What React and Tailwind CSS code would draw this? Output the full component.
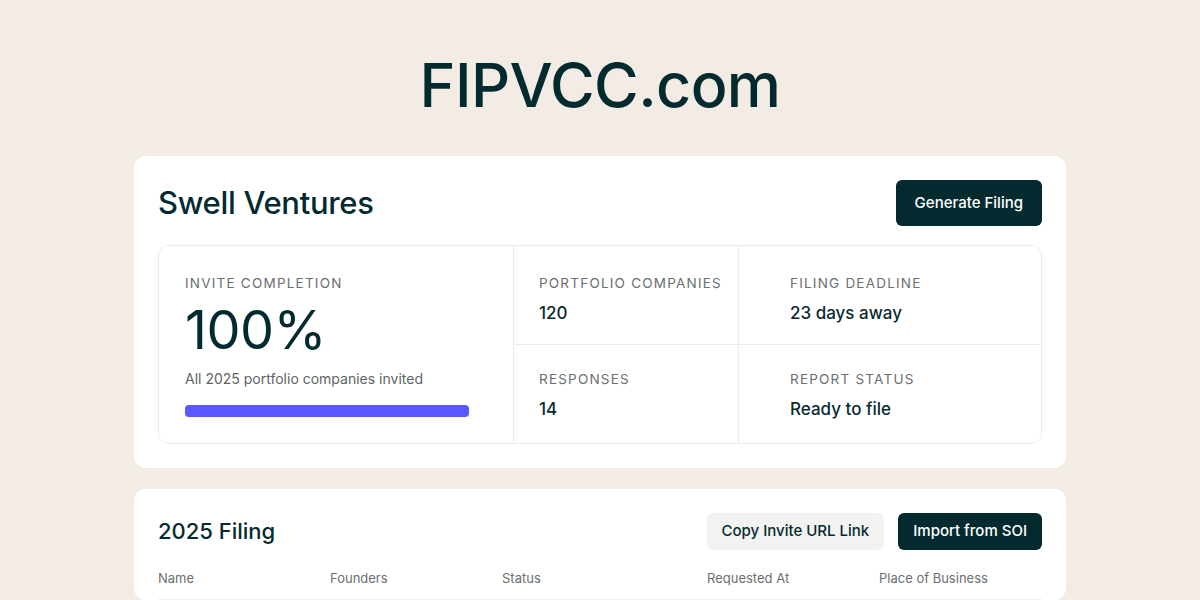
const font = { fontFamily: 'Inter, "Noto Sans", sans-serif' }

const COLUMNS = ['Name', 'Founders', 'Status', 'Requested At', 'Place of Business']

const labelCls = 'whitespace-nowrap text-[13.5px] leading-[16px] tracking-[0.09em] uppercase text-[#6b6f70]'

function Stat({ label, value, className = '' }) {
  return (
    <div className={`flex flex-col px-[25px] ${className}`}>
      <div className={labelCls}>{label}</div>
      <div className="mt-[11px] text-[17px] leading-[22px] font-medium text-[#082b2f]">{value}</div>
    </div>
  )
}

export default function App() {
  return (
    <div className="min-h-screen bg-[#f3ece5] text-[#032b2f]" style={font}>
      <div className="h-[600px] overflow-hidden">
        <h1 className="pt-[47px] text-center text-[61px] leading-[76px] font-medium tracking-[-0.01em] text-[#032b2f]">
          FIPVCC.com
        </h1>

        <div className="mx-auto mt-[33px] w-[932px] rounded-[12px] bg-white px-6 pt-6 pb-6">
          <div className="flex items-center justify-between">
            <h2 className="text-[31px] leading-[46px] font-medium tracking-[-0.01em]">Swell Ventures</h2>
            <button className="h-[46px] rounded-[6px] bg-[#032b2f] px-[19px] text-[15px] font-medium text-white">
              Generate Filing
            </button>
          </div>

          <div className="mt-[19px] flex h-[199px] rounded-[10px] border border-[#ebebea]">
            <div className="flex w-[355px] flex-col border-r border-[#ebebea] px-[26px] pt-[29px]">
              <div className={labelCls}>Invite Completion</div>
              <div className="mt-[9px] text-[54px] leading-[60px] font-normal tracking-[-0.01em]">100%</div>
              <div className="mt-[10px] text-[14px] leading-[18px] text-[#5f6566]">All 2025 portfolio companies invited</div>
              <div className="mt-[17px] h-[12px] w-[284px] rounded-[4px] bg-[#5b57ff]" />
            </div>
            <div className="grid flex-1 grid-cols-[225px_1fr] grid-rows-2">
              <Stat label="Portfolio Companies" value="120" className="border-r border-b border-[#ebebea] pt-[29px]" />
              <Stat label="Filing Deadline" value="23 days away" className="border-b border-[#ebebea] pt-[29px] pl-[51px]" />
              <Stat label="Responses" value="14" className="border-r border-[#ebebea] pt-[26px]" />
              <Stat label="Report Status" value="Ready to file" className="pt-[26px] pl-[51px]" />
            </div>
          </div>
        </div>

        <div className="mx-auto mt-[21px] w-[932px] rounded-[12px] bg-white px-6 pt-6">
          <div className="flex items-center justify-between">
            <h3 className="text-[22px] leading-[37px] font-medium">2025 Filing</h3>
            <div className="flex gap-[14px]">
              <button className="h-[37px] rounded-[6px] bg-[#f2f2f1] px-[15px] text-[15px] font-medium text-[#032b2f]">
                Copy Invite URL Link
              </button>
              <button className="h-[37px] rounded-[6px] bg-[#032b2f] px-[15px] text-[15px] font-medium text-white">
                Import from SOI
              </button>
            </div>
          </div>
          <div className="mt-[19px] grid grid-cols-[172px_172px_205px_172px_1fr] border-b border-[#f0f0ef] pb-[12px] text-[13px] leading-[18px] text-[#6b6f70]">
            {COLUMNS.map(c => (
              <div key={c}>{c}</div>
            ))}
          </div>
        </div>
      </div>
    </div>
  )
}
